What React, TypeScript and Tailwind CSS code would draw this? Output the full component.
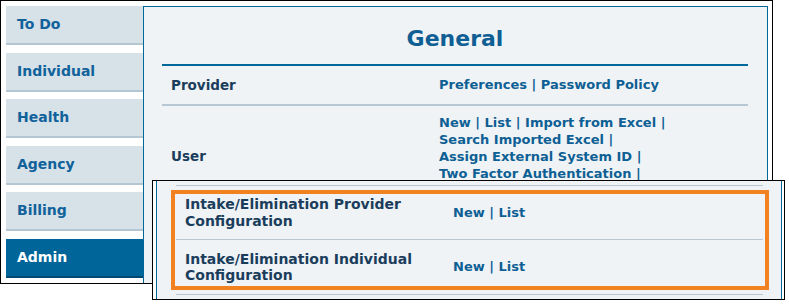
import React from 'react';

const navItems = ['To Do', 'Individual', 'Health', 'Agency', 'Billing', 'Admin'];

const Links = ({ items, trailing = false }: { items: string[]; trailing?: boolean }) => (
  <span>
    {items.map((item, i) => (
      <React.Fragment key={item}>
        <a className="text-[#0d5f94] cursor-pointer">{item}</a>
        {(i < items.length - 1 || trailing) && <span className="text-[#0d5f94]"> | </span>}
      </React.Fragment>
    ))}
  </span>
);

const NavItem = ({ label }: { label: string }) => {
  const active = label === 'Admin';
  return (
    <div
      className={
        active
          ? 'h-[39px] flex items-center pl-[11px] bg-[#006699] border-b-2 border-[#004a72] text-white text-[14px] font-bold'
          : 'h-[39px] flex items-center pl-[11px] bg-[#d7e1e8] border-b-2 border-[#b4c6d2] text-[#11629b] text-[14px] font-bold'
      }
    >
      {label}
    </div>
  );
};

export default function App() {
  return (
    <div className="relative w-[789px] h-[304px] bg-white overflow-hidden font-['DejaVu_Sans',sans-serif]">
      {/* main screenshot frame */}
      <div className="flex w-[773px] h-[284px] border border-black pt-[5px] pl-[5px] pr-[4px]">
        <div className="flex flex-col gap-[7.6px] w-[137px] shrink-0">
          {navItems.map((n) => (
            <NavItem key={n} label={n} />
          ))}
        </div>

        <div className="w-[625px] h-full border-x border-t border-[#00679a] bg-[#eff3f6] pl-[18px] pr-[19px] overflow-hidden">
          <h1 className="h-[57px] pt-[18px] text-center text-[22px] leading-[28px] font-bold text-[#0f5f94]">
            General
          </h1>
          <div className="h-[2px] bg-[#00679a]" />

          <div className="grid grid-cols-[277px_1fr] items-center py-[10px] leading-[18px] border-b-2 border-[#b7c8d4]">
            <div className="pl-[9px] text-[13.5px] font-bold text-[#1b3d5c]">Provider</div>
            <div className="text-[13px] font-bold">
              <Links items={['Preferences', 'Password Policy']} />
            </div>
          </div>

          <div className="grid grid-cols-[277px_1fr] items-center py-[8px] border-b-2 border-[#b7c8d4]">
            <div className="pl-[9px] text-[13.5px] font-bold text-[#1b3d5c]">User</div>
            <div className="text-[13px] leading-[17px] font-bold">
              <div>
                <Links items={['New', 'List', 'Import from Excel']} trailing />
              </div>
              <div>
                <Links items={['Search Imported Excel']} trailing />
              </div>
              <div>
                <Links items={['Assign External System ID']} trailing />
              </div>
              <div>
                <Links items={['Two Factor Authentication']} trailing />
              </div>
              <div>
                <Links items={['Reset Password']} />
              </div>
            </div>
          </div>
        </div>
      </div>

      {/* inset screenshot laid over the page */}
      <div className="absolute left-[152px] top-[180px] w-[633px] h-[120px] border border-black bg-white pl-[3px] pr-[2px]">
        <div className="h-full border-x border-[#00679a] bg-[#eff3f6] pl-[19px] pr-[18px] pt-[4px]">
          <div className="h-px bg-[#b7c8d4]" />
          <div className="grid grid-cols-[277px_1fr] items-center h-[54px] border-b border-[#b7c8d4]">
            <div className="pl-[9px] pr-[8px] text-[14px] leading-[16.5px] font-bold text-[#1b3d5c]">
              Intake/Elimination Provider Configuration
            </div>
            <div className="text-[13px] font-bold">
              <Links items={['New', 'List']} />
            </div>
          </div>
          <div className="grid grid-cols-[277px_1fr] items-center h-[55px] border-b border-[#b7c8d4]">
            <div className="pl-[9px] pr-[8px] text-[14px] leading-[16.5px] font-bold text-[#1b3d5c]">
              Intake/Elimination Individual Configuration
            </div>
            <div className="text-[13px] font-bold">
              <Links items={['New', 'List']} />
            </div>
          </div>
        </div>
        <div className="absolute left-[18px] top-[9px] w-[598px] h-[100px] border-4 border-[#f1821f]" />
      </div>
    </div>
  );
}
